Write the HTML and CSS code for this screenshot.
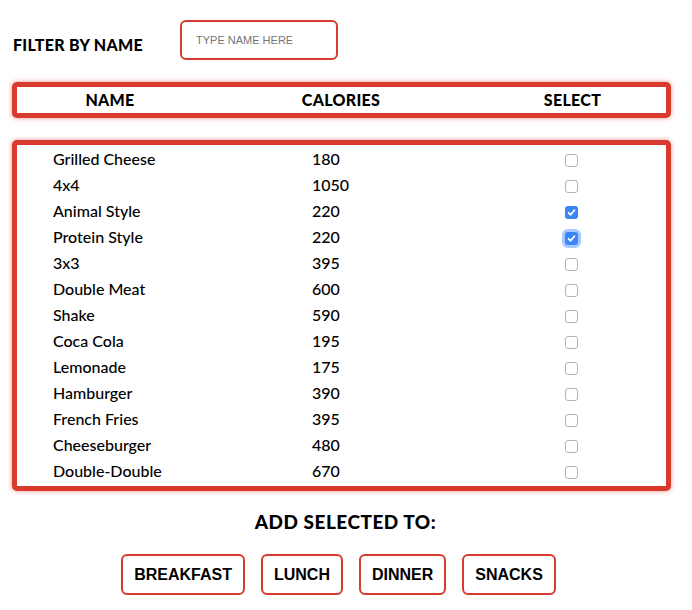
FILE: index.html
```html
<!DOCTYPE html>
<html>
<head>
<meta charset="utf-8">
<link rel="stylesheet" href="styles.css">
</head>
<body>
<div class="page">
  <div class="filter">
    <label class="filter-label" for="q">FILTER BY NAME</label>
    <input id="q" class="filter-input" type="text" placeholder="TYPE NAME HERE">
  </div>

  <div class="box head">
    <div class="hcell">NAME</div>
    <div class="hcell">CALORIES</div>
    <div class="hcell">SELECT</div>
  </div>

  <div class="box list">
    <div class="row"><span>Grilled Cheese</span><span>180</span><span class="cb"></span></div>
    <div class="row"><span>4x4</span><span>1050</span><span class="cb"></span></div>
    <div class="row"><span>Animal Style</span><span>220</span><span class="cb on"><svg viewBox="0 0 13 13"><path d="M3.6 6.8 L5.6 8.8 L9.4 4.2" fill="none" stroke="#fff" stroke-width="1.8" stroke-linecap="round" stroke-linejoin="round"/></svg></span></div>
    <div class="row"><span>Protein Style</span><span>220</span><span class="cb on focus"><svg viewBox="0 0 13 13"><path d="M3.6 6.8 L5.6 8.8 L9.4 4.2" fill="none" stroke="#fff" stroke-width="1.8" stroke-linecap="round" stroke-linejoin="round"/></svg></span></div>
    <div class="row"><span>3x3</span><span>395</span><span class="cb"></span></div>
    <div class="row"><span>Double Meat</span><span>600</span><span class="cb"></span></div>
    <div class="row"><span>Shake</span><span>590</span><span class="cb"></span></div>
    <div class="row"><span>Coca Cola</span><span>195</span><span class="cb"></span></div>
    <div class="row"><span>Lemonade</span><span>175</span><span class="cb"></span></div>
    <div class="row"><span>Hamburger</span><span>390</span><span class="cb"></span></div>
    <div class="row"><span>French Fries</span><span>395</span><span class="cb"></span></div>
    <div class="row"><span>Cheeseburger</span><span>480</span><span class="cb"></span></div>
    <div class="row"><span>Double-Double</span><span>670</span><span class="cb"></span></div>
  </div>

  <h2 class="add-title">ADD SELECTED TO:</h2>
  <div class="actions">
    <button class="btn">BREAKFAST</button>
    <button class="btn">LUNCH</button>
    <button class="btn">DINNER</button>
    <button class="btn">SNACKS</button>
  </div>
</div>
</body>
</html>
```

FILE: styles.css
```css
html, body {
  margin: 0;
  padding: 0;
  background: #fff;
}
body {
  font-family: "Lato", "DejaVu Sans", sans-serif;
  color: #000;
}
.page {
  width: 692px;
  padding: 20px 0 0 12px;
  box-sizing: border-box;
}
.filter {
  display: flex;
  align-items: center;
  height: 40px;
}
.filter-label {
  font-weight: 900;
  font-size: 16px;
  width: 168px;
  padding-left: 1px;
  padding-top: 9px;
  box-sizing: border-box;
  letter-spacing: 0.3px;
}
.filter-input {
  width: 158px;
  height: 40px;
  box-sizing: border-box;
  border: 2px solid #d93a2e;
  border-radius: 6px;
  padding: 0 0 0 14px;
  font-family: "Liberation Sans", Arial, sans-serif;
  font-size: 11px;
  outline: none;
}
.filter-input::placeholder {
  color: #757575;
}
.box {
  width: 659px;
  box-sizing: border-box;
  border: 5px solid #d93a2e;
  border-radius: 5px;
  box-shadow: 0 0 5px rgba(217, 58, 46, 0.55);
  background: #fff;
}
.head {
  margin-top: 22px;
  height: 36px;
  display: grid;
  grid-template-columns: 186px 276px 1fr;
  align-items: center;
}
.hcell {
  text-align: center;
  font-weight: 900;
  font-size: 16px;
  letter-spacing: 0.3px;
  margin-top: -2px;
}
.list {
  margin-top: 22px;
  height: 351px;
  padding: 0 0 3px 36px;
}
.row {
  display: grid;
  grid-template-columns: 259px 253px 13px;
  align-items: center;
  height: 26px;
  font-size: 16px;
  font-weight: 500;
}
.cb {
  width: 13px;
  height: 13px;
  box-sizing: border-box;
  border: 1px solid #b4b4b4;
  border-radius: 3px;
  background: #fff;
  margin-top: 4px;
  display: block;
}
.cb.on {
  border: none;
  background: #3a86f7;
}
.cb.on svg {
  display: block;
  width: 13px;
  height: 13px;
}
.cb.focus {
  box-shadow: 0 0 0 3px rgba(110, 165, 250, 0.6);
}
.add-title {
  margin: 19px 0 0 0;
  width: 667px;
  text-align: center;
  font-weight: 900;
  font-size: 19px;
  letter-spacing: 0.5px;
  line-height: 24px;
}
.actions {
  margin-top: 20px;
  width: 667px;
  display: flex;
  justify-content: center;
  gap: 16px;
  padding-right: 14px;
  box-sizing: border-box;
}
.btn {
  height: 41px;
  padding: 0 11px;
  border: 2px solid #d93a2e;
  border-radius: 6px;
  background: #fff;
  font-family: "Liberation Sans", Arial, sans-serif;
  font-weight: 700;
  font-size: 16px;
  color: #000;
}
```
